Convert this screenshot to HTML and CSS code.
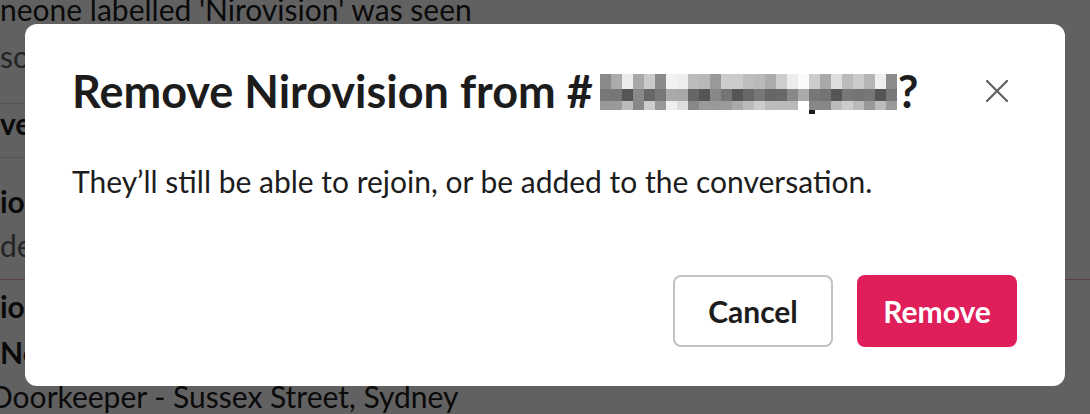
FILE: index.html
```html
<!DOCTYPE html>
<html lang="en">
<head>
  <meta charset="UTF-8">
  <meta name="viewport" content="width=device-width, initial-scale=1.0">
  <title>Remove Nirovision</title>
  <link rel="stylesheet" href="styles.css">
</head>
<body>
  <!-- channel behind the dialog -->
  <div class="feed">
    <p class="row row-first">neone labelled 'Nirovision' was seen</p>
    <p class="row row-muted row-so">so</p>
    <hr class="rule rule-a">
    <p class="row row-bold row-ve">ve</p>
    <hr class="rule rule-b">
    <p class="row row-bold row-io">io</p>
    <p class="row row-muted row-de">de</p>
    <hr class="rule rule-new">
    <p class="row row-bold row-io2">io</p>
    <p class="row row-bold row-no">No</p>
    <p class="row row-last">Doorkeeper - Sussex Street, Sydney</p>
  </div>

  <div class="overlay">
    <div class="modal">
      <div class="modal-header">
        <h1 class="modal-title">Remove Nirovision from #<svg class="blurred" width="297" height="40" viewBox="0 0 297 40">
            <g class="mosaic-top">
              <rect x="0" y="0" width="11" height="15" fill="#8a8a8a"/>
              <rect x="11" y="0" width="11" height="15" fill="#ababab"/>
              <rect x="22" y="0" width="11" height="15" fill="#ececec"/>
              <rect x="33" y="0" width="11" height="15" fill="#a8a8a8"/>
              <rect x="44" y="0" width="11" height="15" fill="#cacaca"/>
              <rect x="55" y="0" width="11" height="15" fill="#8a8a8a"/>
              <rect x="66" y="0" width="11" height="15" fill="#f2f2f2"/>
              <rect x="77" y="0" width="11" height="15" fill="#eeeeee"/>
              <rect x="88" y="0" width="11" height="15" fill="#bcbcbc"/>
              <rect x="99" y="0" width="11" height="15" fill="#b8b8b8"/>
              <rect x="110" y="0" width="11" height="15" fill="#999999"/>
              <rect x="121" y="0" width="11" height="15" fill="#cccccc"/>
              <rect x="132" y="0" width="11" height="15" fill="#cbcbcb"/>
              <rect x="143" y="0" width="11" height="15" fill="#bdbdbd"/>
              <rect x="154" y="0" width="11" height="15" fill="#bababa"/>
              <rect x="165" y="0" width="11" height="15" fill="#ababab"/>
              <rect x="176" y="0" width="11" height="15" fill="#cdcdcd"/>
              <rect x="187" y="0" width="11" height="15" fill="#ececec"/>
              <rect x="198" y="0" width="11" height="15" fill="#fafafa"/>
              <rect x="209" y="0" width="11" height="15" fill="#cccccc"/>
              <rect x="220" y="0" width="11" height="15" fill="#a9a9a9"/>
              <rect x="231" y="0" width="11" height="15" fill="#dddddd"/>
              <rect x="242" y="0" width="11" height="15" fill="#bbbbbb"/>
              <rect x="253" y="0" width="11" height="15" fill="#cbcbcb"/>
              <rect x="264" y="0" width="11" height="15" fill="#b5b5b5"/>
              <rect x="275" y="0" width="11" height="15" fill="#efefef"/>
              <rect x="286" y="0" width="11" height="15" fill="#8b8b8b"/>
            </g>
            <g class="mosaic-mid">
              <rect x="0" y="15" width="11" height="12" fill="#777777"/>
              <rect x="11" y="15" width="11" height="12" fill="#767676"/>
              <rect x="22" y="15" width="11" height="12" fill="#555555"/>
              <rect x="33" y="15" width="11" height="12" fill="#888888"/>
              <rect x="44" y="15" width="11" height="12" fill="#666666"/>
              <rect x="55" y="15" width="11" height="12" fill="#777777"/>
              <rect x="66" y="15" width="11" height="12" fill="#aaaaaa"/>
              <rect x="77" y="15" width="11" height="12" fill="#a8a8a8"/>
              <rect x="88" y="15" width="11" height="12" fill="#666666"/>
              <rect x="99" y="15" width="11" height="12" fill="#555555"/>
              <rect x="110" y="15" width="11" height="12" fill="#888888"/>
              <rect x="121" y="15" width="11" height="12" fill="#747474"/>
              <rect x="132" y="15" width="11" height="12" fill="#555555"/>
              <rect x="143" y="15" width="11" height="12" fill="#676767"/>
              <rect x="154" y="15" width="11" height="12" fill="#777777"/>
              <rect x="165" y="15" width="11" height="12" fill="#666666"/>
              <rect x="176" y="15" width="11" height="12" fill="#686868"/>
              <rect x="187" y="15" width="11" height="12" fill="#888888"/>
              <rect x="198" y="15" width="11" height="12" fill="#aaaaaa"/>
              <rect x="209" y="15" width="11" height="12" fill="#777777"/>
              <rect x="220" y="15" width="11" height="12" fill="#737373"/>
              <rect x="231" y="15" width="11" height="12" fill="#555555"/>
              <rect x="242" y="15" width="11" height="12" fill="#777777"/>
              <rect x="253" y="15" width="11" height="12" fill="#747474"/>
              <rect x="264" y="15" width="11" height="12" fill="#777777"/>
              <rect x="275" y="15" width="11" height="12" fill="#555555"/>
              <rect x="286" y="15" width="11" height="12" fill="#787878"/>
            </g>
            <g class="mosaic-low">
              <rect x="0" y="27" width="11" height="9" fill="#999999"/>
              <rect x="11" y="27" width="11" height="9" fill="#9a9a9a"/>
              <rect x="22" y="27" width="11" height="9" fill="#bbbbbb"/>
              <rect x="33" y="27" width="11" height="9" fill="#888888"/>
              <rect x="44" y="27" width="11" height="9" fill="#cccccc"/>
              <rect x="55" y="27" width="11" height="9" fill="#999999"/>
              <rect x="66" y="27" width="11" height="9" fill="#eeeeee"/>
              <rect x="77" y="27" width="11" height="9" fill="#dddddd"/>
              <rect x="88" y="27" width="11" height="9" fill="#888888"/>
              <rect x="99" y="27" width="11" height="9" fill="#9a9a9a"/>
              <rect x="110" y="27" width="11" height="9" fill="#999999"/>
              <rect x="121" y="27" width="11" height="9" fill="#9b9b9b"/>
              <rect x="132" y="27" width="11" height="9" fill="#aaaaaa"/>
              <rect x="143" y="27" width="11" height="9" fill="#bbbbbb"/>
              <rect x="154" y="27" width="11" height="9" fill="#cccccc"/>
              <rect x="165" y="27" width="11" height="9" fill="#bcbcbc"/>
              <rect x="176" y="27" width="11" height="9" fill="#bbbbbb"/>
              <rect x="187" y="27" width="11" height="9" fill="#bababa"/>
              <rect x="198" y="27" width="11" height="9" fill="#ffffff"/>
              <rect x="209" y="27" width="11" height="9" fill="#888888"/>
              <rect x="220" y="27" width="11" height="9" fill="#878787"/>
              <rect x="231" y="27" width="11" height="9" fill="#bbbbbb"/>
              <rect x="242" y="27" width="11" height="9" fill="#cccccc"/>
              <rect x="253" y="27" width="11" height="9" fill="#bbbbbb"/>
              <rect x="264" y="27" width="11" height="9" fill="#999999"/>
              <rect x="275" y="27" width="11" height="9" fill="#bcbcbc"/>
              <rect x="286" y="27" width="11" height="9" fill="#9a9a9a"/>
            </g>
            <rect x="209" y="36" width="6" height="4" fill="#1d1c1d"/>
          </svg>?</h1>
        <button class="close" aria-label="Close">
          <svg width="22" height="22" viewBox="0 0 22 22">
            <path d="M1 1 L21 21 M21 1 L1 21" stroke="#616061" stroke-width="2.2" stroke-linecap="round" fill="none"/>
          </svg>
        </button>
      </div>
      <p class="modal-body">They’ll still be able to rejoin, or be added to the conversation.</p>
      <div class="modal-footer">
        <button class="btn btn-cancel">Cancel</button>
        <button class="btn btn-remove">Remove</button>
      </div>
    </div>
  </div>
</body>
</html>
```

FILE: styles.css
```css
html, body {
  margin: 0;
  height: 100%;
  overflow: hidden;
}

body {
  background: #ffffff;
  font-family: "Lato", "Noto Sans", sans-serif;
  color: #1d1c1d;
}

/* ---- channel behind ---- */
.feed {
  margin-top: -9px;
}

.row {
  margin: 0;
  font-size: 30px;
  line-height: 36px;
  white-space: nowrap;
}

.row-muted {
  color: #616061;
}

.row-bold {
  font-weight: 700;
}

.row-so { margin-top: 11px; }
.row-ve { margin-top: 1px; }
.row-io { margin-top: 25px; }
.row-de { margin-top: 8px; }
.row-io2 { margin-top: 8px; }
.row-no { margin-top: 10px; }
.row-last { margin-top: 8px; margin-left: -10px; }

.rule {
  border: 0;
  margin: 0;
  height: 1px;
}

.rule-a {
  margin-top: 29px;
  width: 60px;
  background: #dddddd;
}

.rule-b {
  margin-top: 16px;
  width: 60px;
  background: #dddddd;
}

.rule-new {
  margin-top: 16px;
  background: #e8a3b8;
}

/* ---- dialog ---- */
.overlay {
  position: fixed;
  inset: 0;
  background: rgba(0, 0, 0, 0.62);
  display: flex;
  align-items: flex-start;
  justify-content: center;
  padding-top: 24px;
}

.modal {
  width: 1040px;
  box-sizing: border-box;
  background: #ffffff;
  border-radius: 12px;
  padding: 40px 48px 39px 47px;
}

.modal-header {
  display: flex;
  align-items: center;
  justify-content: space-between;
}

.modal-title {
  margin: 0;
  font-size: 45px;
  font-weight: 700;
  line-height: 1.2;
  color: #1d1c1d;
  white-space: nowrap;
}

.blurred {
  vertical-align: -6px;
  margin-left: 7px;
  margin-right: 1px;
}

.close {
  width: 40px;
  height: 40px;
  padding: 0;
  border: 0;
  background: none;
  display: flex;
  align-items: center;
  justify-content: center;
  cursor: pointer;
}

.modal-body {
  margin: 45px 0 0;
  font-size: 30px;
  line-height: 1.2;
  color: #1d1c1d;
}

.modal-footer {
  margin-top: 76px;
  display: flex;
  justify-content: flex-end;
  gap: 24px;
}

.btn {
  width: 160px;
  height: 72px;
  box-sizing: border-box;
  border-radius: 8px;
  font-family: "Lato", sans-serif;
  font-size: 30px;
  font-weight: 700;
  cursor: pointer;
}

.btn-cancel {
  background: #ffffff;
  color: #1d1c1d;
  border: 2px solid #c2c2c2;
}

.btn-remove {
  background: #e01e5a;
  color: #ffffff;
  border: 0;
}
```
